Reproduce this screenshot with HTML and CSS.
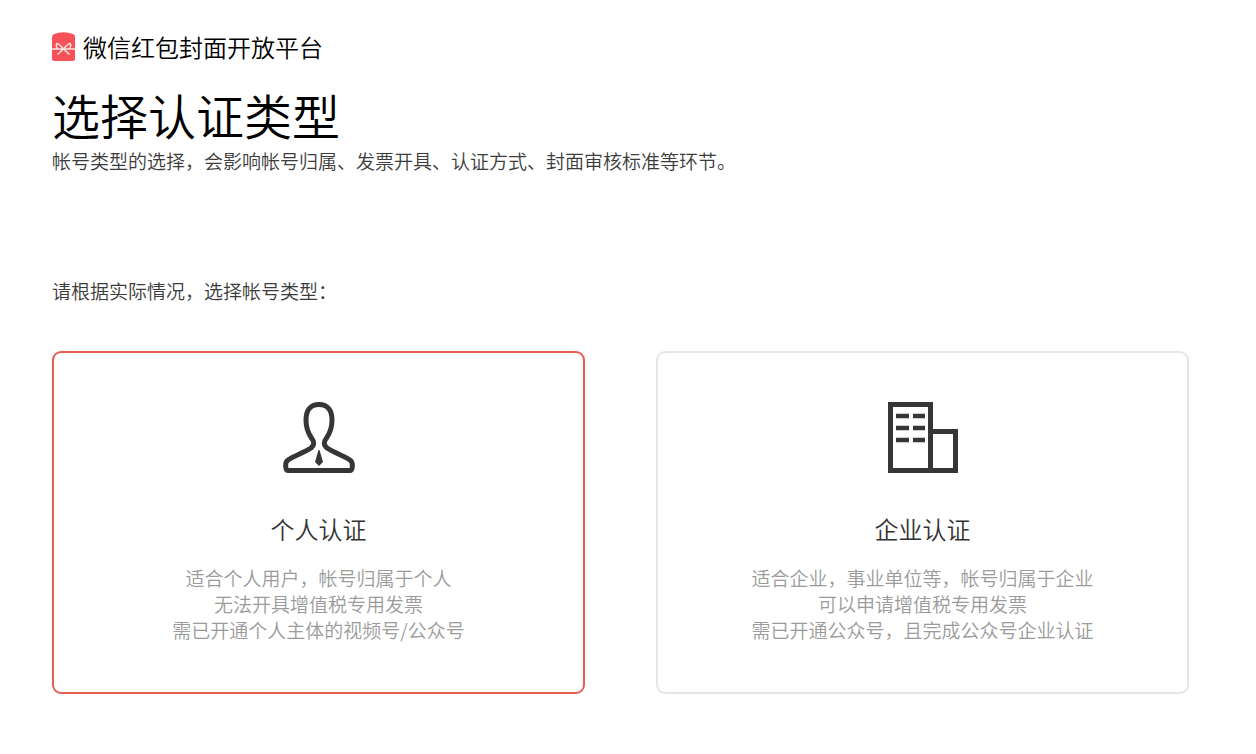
FILE: index.html
```html
<!doctype html>
<html lang="zh-CN">
<head>
    <meta charset="utf-8">
    <meta name="viewport" content="width=device-width, initial-scale=1">
    <title>选择认证类型 - 微信红包封面开放平台</title>
    <link rel="stylesheet" href="styles.css">
</head>
<body>
    <header>
        <div class="brand">
            <svg class="logo" viewBox="0 0 23 29" aria-hidden="true">
                <path fill="#f9515a" d="M0 5Q0 3 2 2Q11.500-1.500 21 2Q23 3 23 5V27Q23 29 21 29H2Q0 29 0 27Z"/>
                <path fill="none" stroke="#fde6dc" stroke-width="1.500" stroke-linecap="round" stroke-linejoin="round" d="M0 17H5.500M17.500 17H23M11.500 17Q5.500 10 4.500 12Q4 15 5.500 17H11.500M11.500 17Q17.500 10 18.500 12Q19 15 17.500 17H11.500M11.500 17L6 22M11.500 17L17 22"/>
            </svg>
            <span>微信红包封面开放平台</span>
        </div>
        <h1>选择认证类型</h1>
        <p>帐号类型的选择，会影响帐号归属、发票开具、认证方式、封面审核标准等环节。</p>
    </header>

    <main>
        <p id="prompt">请根据实际情况，选择帐号类型：</p>
        <div class="types" role="radiogroup" aria-labelledby="prompt">
            <label class="card" for="personal">
                <input type="radio" id="personal" name="type" value="personal" checked>
                <svg class="icon" viewBox="0 0 72 72" aria-hidden="true">
                    <path fill="none" stroke="#363636" stroke-width="5" stroke-linejoin="round" d="M36 2.500C27 2.500 23 8.500 23 18C23 26 25 31 28.500 36C31.500 40 31.500 43 28 46C22 50 10 54.500 5 58C2 60 2.500 64 3 66.500Q3.500 68.500 5 68.500H67Q68.500 68.500 69 66.500C69.500 64 70 60 67 58C62 54.500 50 50 44 46C40.500 43 40.500 40 43.500 36C47 31 49 26 49 18C49 8.500 45 2.500 36 2.500Z"/>
                    <path fill="#363636" d="M35.500 48H36.500L40 60L36 64L32 60Z"/>
                </svg>
                <span class="name">个人认证</span>
                <span class="desc">适合个人用户，帐号归属于个人<br>无法开具增值税专用发票<br>需已开通个人主体的视频号/公众号</span>
            </label>
            <label class="card" for="company">
                <input type="radio" id="company" name="type" value="company">
                <svg class="icon" viewBox="0 0 72 72" aria-hidden="true">
                    <path fill="none" stroke="#363636" stroke-width="5" d="M3.500 2.500H43.500V68.500H3.500ZM43.500 29.500H68.500V68.500H43.500"/>
                    <path fill="none" stroke="#363636" stroke-width="4.500" d="M9 14H22M26 14H38M9 26H22M26 26H38M9 38H22M26 38H38"/>
                </svg>
                <span class="name">企业认证</span>
                <span class="desc">适合企业，事业单位等，帐号归属于企业<br>可以申请增值税专用发票<br>需已开通公众号，且完成公众号企业认证</span>
            </label>
        </div>
    </main>
</body>
</html>
```
FILE: styles.css
```css
/* Reset */
* { box-sizing: border-box; margin: 0; padding: 0; }

/* Page Style */
body {
    padding: 31px 67px 56px 52px;
    background-color: #fff;
    color: #3c3c3c;
    font-family: "Noto Sans CJK SC", sans-serif;
    font-size: 19px;
    font-weight: 350;
    line-height: 26px;
}

/* Header */
.brand {
    display: flex;
    align-items: center;
    gap: 8px;
    color: #000;
    font-size: 24px;
    line-height: 31px;
}
.logo { width: 23px; height: 29px; }
h1 {
    margin-top: 22px;
    margin-bottom: 4px;
    color: #000;
    font-size: 48px;
    font-weight: 350;
    line-height: 60px;
}

/* Account types */
main { margin-top: 104px; }
.types {
    display: grid;
    grid-template-columns: 1fr 1fr;
    gap: 71px;
    margin-top: 47px;
}
.card {
    display: flex;
    flex-direction: column;
    align-items: center;
    padding: 49px 20px;
    border: 2px solid #e6e6e6;
    border-radius: 9px;
    text-align: center;
    cursor: pointer;
}
.card:has(input:checked) { border-color: #e65d51; }
.card input {
    position: absolute;
    opacity: 0;
}
.icon { width: 72px; height: 72px; }
.name {
    margin-top: 39px;
    color: #333;
    font-size: 24px;
    line-height: 32px;
}
.desc {
    margin-top: 20px;
    color: #9b9b9b;
}
```
